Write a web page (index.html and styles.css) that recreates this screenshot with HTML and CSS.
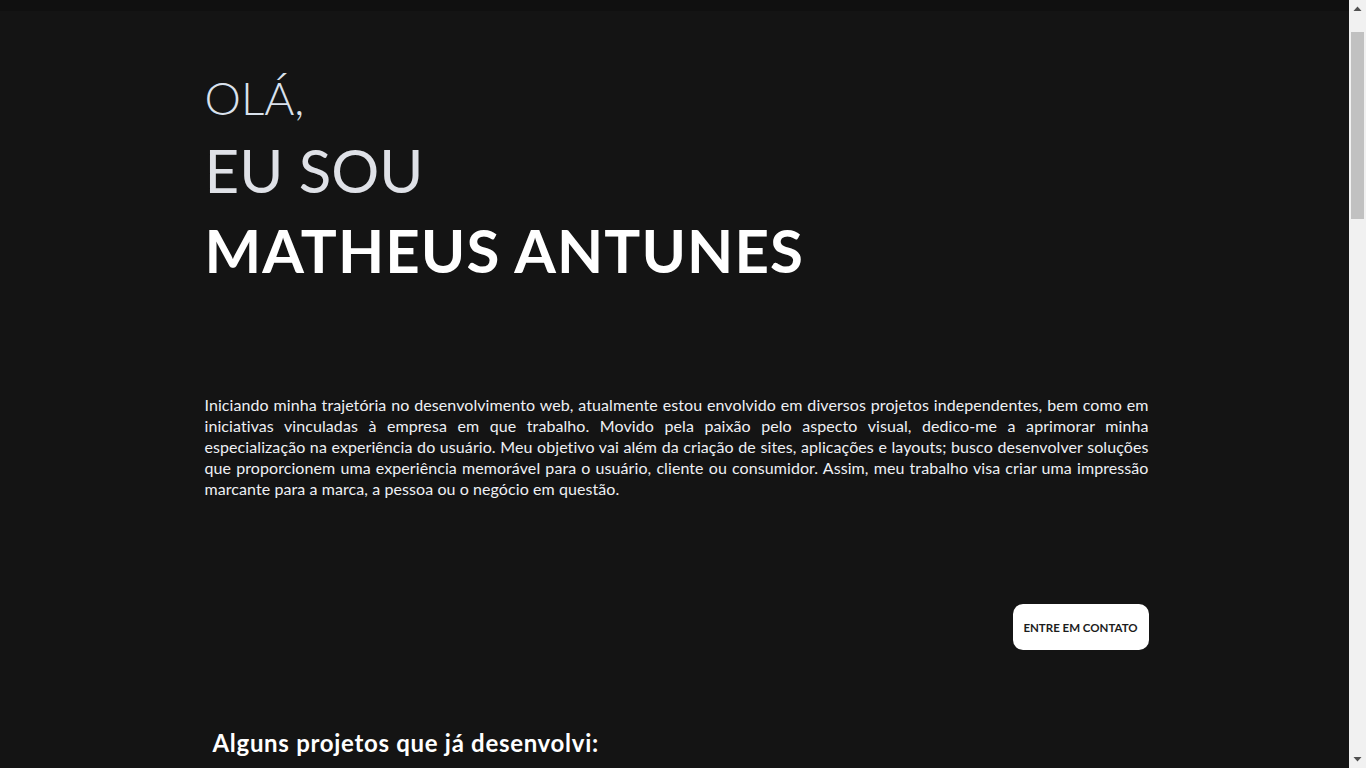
FILE: index.html
```html
<!DOCTYPE html>
<html lang="pt-BR">
<head>
<meta charset="utf-8">
<title>Matheus Antunes</title>
<link rel="stylesheet" href="styles.css">
</head>
<body>
<div class="app">
  <div class="viewport">
    <header class="topbar"></header>
    <main class="page">
      <section class="hero">
        <h1 class="hero-title">
          <span class="hello">OLÁ,</span>
          <span class="iam">EU SOU</span>
          <span class="name">MATHEUS ANTUNES</span>
        </h1>
        <p class="intro">Iniciando minha trajetória no desenvolvimento web, atualmente estou envolvido em diversos projetos independentes, bem como em iniciativas vinculadas à empresa em que trabalho. Movido pela paixão pelo aspecto visual, dedico-me a aprimorar minha especialização na experiência do usuário. Meu objetivo vai além da criação de sites, aplicações e layouts; busco desenvolver soluções que proporcionem uma experiência memorável para o usuário, cliente ou consumidor. Assim, meu trabalho visa criar uma impressão marcante para a marca, a pessoa ou o negócio em questão.</p>
        <div class="actions">
          <a class="contact-btn" href="#contato">ENTRE EM CONTATO</a>
        </div>
      </section>
      <section class="projects">
        <h2 class="projects-title">Alguns projetos que já desenvolvi:</h2>
      </section>
    </main>
  </div>
  <div class="scrollbar" aria-hidden="true">
    <div class="sb-btn"><svg width="17" height="17" viewBox="0 0 17 17"><path d="M4.5 11 L8.5 6.5 L12.5 11 Z" fill="#505050"/></svg></div>
    <div class="sb-track"><div class="sb-thumb"></div></div>
    <div class="sb-btn"><svg width="17" height="17" viewBox="0 0 17 17"><path d="M4.5 6 L8.5 10.5 L12.5 6 Z" fill="#505050"/></svg></div>
  </div>
</div>
</body>
</html>
```

FILE: styles.css
```css
html, body {
  margin: 0;
  padding: 0;
}
body {
  background: #141414;
  color: #e8eaf0;
  font-family: "Lato", "Noto Sans", sans-serif;
}
.app {
  display: grid;
  grid-template-columns: 1fr 17px;
  height: 100vh;
  overflow: hidden;
}
.viewport {
  overflow: hidden;
  min-width: 0;
  padding-left: 4px;
}
.scrollbar {
  display: flex;
  flex-direction: column;
  background: #f1f1f1;
}
.sb-btn {
  height: 17px;
  flex: none;
}
.sb-btn svg {
  display: block;
}
.sb-track {
  flex: 1;
  padding: 15px 2px 0;
}
.sb-thumb {
  height: 187px;
  background: #c1c1c1;
}
.topbar {
  height: 11px;
  margin-left: -4px;
  background: #101010;
}
.page {
  width: 944px;
  margin: 0 auto;
}
.hero {
  padding-top: 54px;
  display: flex;
  flex-direction: column;
}
.hero-title {
  margin: 0;
  display: flex;
  flex-direction: column;
  font-weight: 400;
}
.hello {
  font-size: 46px;
  font-weight: 300;
  line-height: 65px;
  color: #d9e1ec;
}
.iam {
  font-size: 60px;
  font-weight: 400;
  line-height: 80px;
  color: #dfe1e7;
}
.name {
  font-size: 60px;
  font-weight: 700;
  line-height: 80px;
  letter-spacing: 1.1px;
  color: #ffffff;
}
.intro {
  margin: 104px 0 0;
  font-size: 16px;
  line-height: 21px;
  letter-spacing: 0.08px;
  text-align: justify;
  color: #eef0f4;
}
.actions {
  display: flex;
  justify-content: flex-end;
  margin-top: 105px;
}
.contact-btn {
  display: flex;
  align-items: center;
  justify-content: center;
  width: 136px;
  height: 46px;
  border-radius: 10px;
  background: #ffffff;
  color: #1c1c1c;
  font-size: 11.5px;
  font-weight: 700;
  text-decoration: none;
}
.projects {
  padding: 77px 8px 0;
}
.projects-title {
  margin: 0;
  font-size: 24px;
  line-height: 32px;
  font-weight: 700;
  letter-spacing: 0.7px;
  color: #ffffff;
}
```
